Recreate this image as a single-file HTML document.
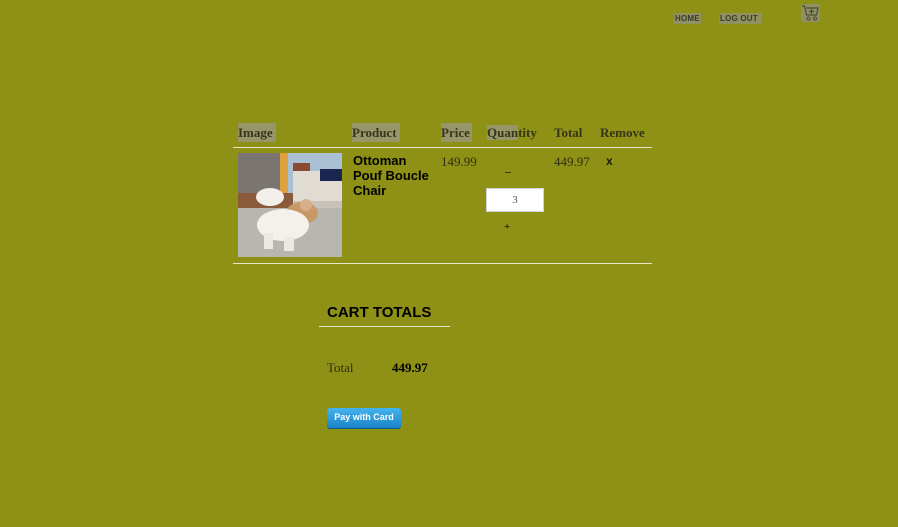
<!DOCTYPE html>
<html><head><meta charset="utf-8"><style>
body{margin:0;width:898px;height:527px;background:#8e9115;font-family:"Liberation Serif",serif;position:relative;overflow:hidden}
.a{position:absolute}
.nav{font-family:"Liberation Sans",sans-serif;font-weight:bold;font-size:8px;color:#3a3a2a;background:#8f9163;padding:1px 1px;letter-spacing:.2px}
.th{font-size:13px;font-weight:bold;color:#35361a;top:123px;line-height:19px}
.hl{background:#96966a}
.line{height:1px;background:#e6e6c8}
</style></head><body>
<div class="a nav" style="left:674px;top:13px">HOME</div>
<div class="a nav" style="left:719px;top:13px;padding-right:4px">LOG OUT</div>
<svg class="a" style="left:801px;top:4px" width="19" height="18" viewBox="0 0 19 18"><rect x="0" y="0" width="19" height="18" fill="#8f9163"/><path d="M1 2h2.5l2 9h10l1.5-7H5" fill="none" stroke="#4a4a3a" stroke-width="1.2"/><circle cx="7.5" cy="14.5" r="1.5" fill="none" stroke="#4a4a3a"/><circle cx="14" cy="14.5" r="1.5" fill="none" stroke="#4a4a3a"/><path d="M10.5 5v5M8 7.5h5" stroke="#4a4a3a" stroke-width="1.2"/></svg>

<div class="a th hl" style="left:238px;padding-right:3px">Image</div>
<div class="a th hl" style="left:352px;padding-right:3px">Product</div>
<div class="a th hl" style="left:441px;padding-right:2px">Price</div>
<div class="a th" style="left:487px"><span class="hl">Quan</span>tity</div>
<div class="a th" style="left:554px">Total</div>
<div class="a th" style="left:600px">Remove</div>
<div class="a line" style="left:233px;top:147px;width:419px"></div>

<svg class="a" style="left:238px;top:153px" width="104" height="104" viewBox="0 0 104 104">
<rect width="104" height="104" fill="#c7c3bb"/>
<rect x="0" y="0" width="45" height="45" fill="#7a7570"/>
<rect x="42" y="0" width="8" height="40" fill="#e0a040"/>
<rect x="50" y="0" width="54" height="40" fill="#a9c0d4"/>
<rect x="55" y="10" width="17" height="20" fill="#8a4a30"/>
<rect x="55" y="18" width="49" height="30" fill="#e0dcd4"/>
<rect x="82" y="16" width="22" height="12" fill="#1a2650"/>
<rect x="0" y="40" width="55" height="20" fill="#8a5a3a"/>
<rect x="0" y="55" width="104" height="49" fill="#b8b6b0"/>
<ellipse cx="64" cy="60" rx="16" ry="11" fill="#c89868"/>
<circle cx="68" cy="52" r="6" fill="#d8b088"/>
<ellipse cx="45" cy="72" rx="26" ry="16" fill="#f4f0ec"/>
<ellipse cx="32" cy="44" rx="14" ry="9" fill="#f2eeea"/>
<rect x="26" y="80" width="9" height="16" fill="#ece8e2"/>
<rect x="46" y="84" width="10" height="14" fill="#ece8e2"/>
</svg>

<div class="a" style="left:353px;top:153px;font-family:'Liberation Sans',sans-serif;font-weight:bold;font-size:13px;line-height:15px;color:#000;width:80px">Ottoman Pouf Boucle Chair</div>
<div class="a" style="left:441px;top:154px;font-size:13px;color:#2f3010">149.99</div>
<div class="a" style="left:505px;top:160px;font-size:12px;color:#000">_</div>
<div class="a" style="left:486px;top:188px;width:56px;height:22px;background:#fff;border:1px solid #cfd4d8;text-align:center;font-size:11px;line-height:22px;color:#555">3</div>
<div class="a" style="left:504px;top:221px;font-size:11px;color:#000">+</div>
<div class="a" style="left:554px;top:154px;font-size:13px;color:#2f3010">449.97</div>
<div class="a" style="left:606px;top:154px;font-family:'Liberation Sans',sans-serif;font-weight:bold;font-size:12px;color:#1a1a10">x</div>
<div class="a line" style="left:233px;top:263px;width:419px"></div>

<div class="a" style="left:327px;top:304px;font-family:'Liberation Sans',sans-serif;font-weight:bold;font-size:15px;color:#000">CART TOTALS</div>
<div class="a line" style="left:319px;top:326px;width:131px"></div>
<div class="a" style="left:327px;top:360px;font-size:13px;color:#2f3010">Total</div>
<div class="a" style="left:392px;top:360px;font-size:13px;color:#000;font-weight:bold">449.97</div>
<div class="a" style="left:327px;top:408px;width:74px;height:20px;border-radius:3px;background:linear-gradient(#45b4ee,#1a84c8);box-shadow:0 1px 0 #0d5a90;color:#fff;font-family:'Liberation Sans',sans-serif;font-weight:bold;font-size:9px;line-height:18px;text-align:center">Pay with Card</div>
</body></html>
